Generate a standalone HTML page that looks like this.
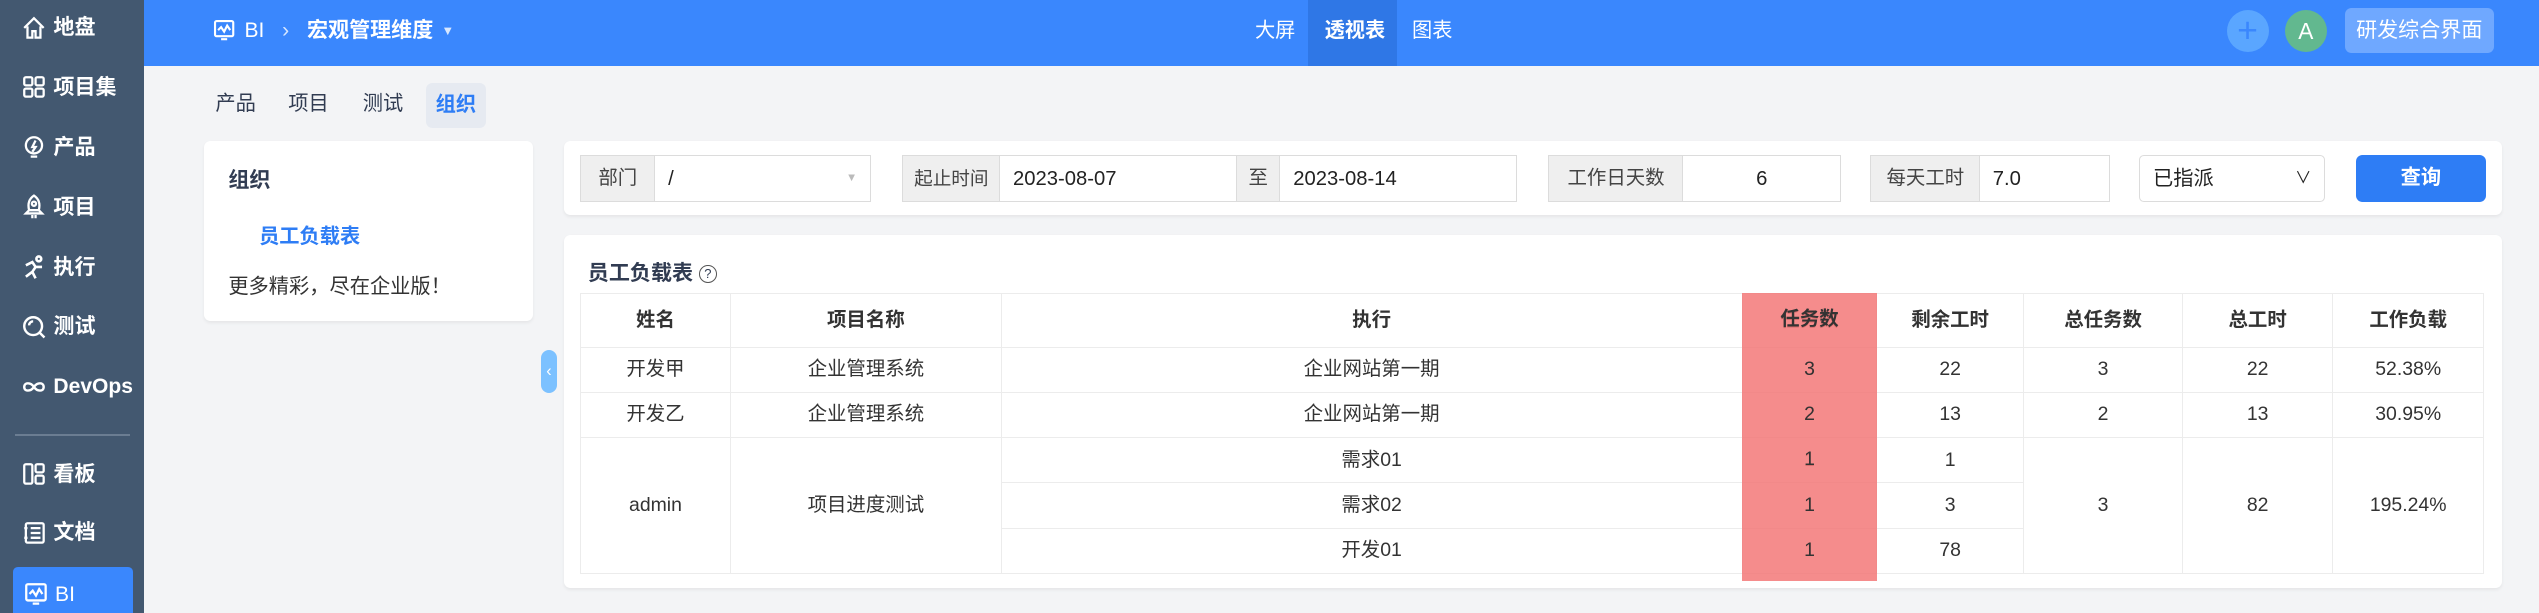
<!DOCTYPE html>
<html><head><meta charset="utf-8"><style>
*{box-sizing:border-box;margin:0;padding:0}
html,body{width:2539px;height:613px;overflow:hidden;background:#f3f4f6}
#r{zoom:1.6193;width:1568px;height:379px;position:relative;font-family:"Liberation Sans","Noto Sans CJK SC",sans-serif;font-size:12.5px;line-height:1.2;color:#313c52}
.a{position:absolute}
#sb{left:0;top:0;width:89px;height:379px;background:#435870}
.si{position:absolute;left:13px;color:#fff;font-size:13px;font-weight:bold;display:flex;align-items:center;gap:4px;height:20px}
.si svg{width:16px;height:16px}
#hd{left:89px;top:0;width:1479px;height:41px;background:#3a87fd;color:#fff}
.card{background:#fff;border-radius:4px;box-shadow:0 1px 2px rgba(0,0,0,.06)}
.lbl{position:absolute;top:96px;height:29px;background:#efefef;border:1px solid #dcdcdc;color:#444;display:flex;align-items:center;justify-content:center;font-size:12px}
.inp{position:absolute;top:96px;height:29px;background:#fff;border:1px solid #dcdcdc;display:flex;align-items:center;padding-left:8px;color:#222}
table{border-collapse:collapse;position:absolute;left:358px;top:181px;width:1176px}
td{border:1px solid #ececec;text-align:center;height:28px;font-size:12px;color:#333;line-height:1}
tr.h td{height:33px;font-weight:bold;color:#333}
</style></head><body><div id="r">
<div id="sb" class="a">
<div class="si" style="top:7px"><svg viewBox="0 0 16 16" fill="none" stroke="#fff" stroke-width="1.4"><path d="M2 8L8 2l6 6M4 7v7h3v-4h2v4h3V7"/></svg>地盘</div>
<div class="si" style="top:44px"><svg viewBox="0 0 16 16" fill="none" stroke="#fff" stroke-width="1.4"><rect x="2" y="2" width="5" height="5" rx="1"/><rect x="9" y="2" width="5" height="5" rx="1"/><rect x="2" y="9" width="5" height="5" rx="1"/><rect x="9" y="9" width="5" height="5" rx="1"/></svg>项目集</div>
<div class="si" style="top:81px"><svg viewBox="0 0 16 16" fill="none" stroke="#fff" stroke-width="1.4"><circle cx="8" cy="7" r="5"/><path d="M6 14h4M9 4L7 8h2l-2 3"/></svg>产品</div>
<div class="si" style="top:118px"><svg viewBox="0 0 16 16" fill="none" stroke="#fff" stroke-width="1.4"><path d="M8 1c3 2 4 5 3 9H5C4 6 5 3 8 1zM5 10l-2 2h10l-2-2M7 13v2M9 13v2"/><circle cx="8" cy="6" r="1.3"/></svg>项目</div>
<div class="si" style="top:155px"><svg viewBox="0 0 16 16" fill="none" stroke="#fff" stroke-width="1.6"><circle cx="11" cy="3" r="1.5"/><path d="M3 7l4-2 2 3-2 3 2 4M7 11l-4 3M9 8h4"/></svg>执行</div>
<div class="si" style="top:192px"><svg viewBox="0 0 16 16" fill="none" stroke="#fff" stroke-width="1.5"><circle cx="7.5" cy="7.5" r="5.5"/><path d="M11.5 11.5l3 3M5 7a2.5 2.5 0 0 1 2.5-2.5"/></svg>测试</div>
<div class="si" style="top:229px"><svg viewBox="0 0 16 16" fill="none" stroke="#fff" stroke-width="1.5"><path d="M8 8c-2-3-6-3-6 0s4 3 6 0 6-3 6 0-4 3-6 0"/></svg>DevOps</div>
<div class="a" style="left:9px;top:268px;width:71px;height:1px;background:#6b7d92"></div>
<div class="si" style="top:283px"><svg viewBox="0 0 16 16" fill="none" stroke="#fff" stroke-width="1.4"><rect x="2" y="2" width="5" height="12" rx="1"/><rect x="9" y="2" width="5" height="5" rx="1"/><rect x="9" y="9" width="5" height="5" rx="1"/></svg>看板</div>
<div class="si" style="top:319px"><svg viewBox="0 0 16 16" fill="none" stroke="#fff" stroke-width="1.4"><rect x="3" y="2" width="11" height="12" rx="1"/><path d="M6 5h6M6 8h6M6 11h6M2 5h2M2 11h2"/></svg>文档</div>
<div class="a" style="left:8px;top:350px;width:74px;height:29px;background:#3a87fd;border-radius:3px 3px 0 0"></div>
<div class="si" style="top:357px;left:14px;font-weight:normal"><svg viewBox="0 0 16 16" fill="none" stroke="#fff" stroke-width="1.4"><rect x="2" y="2" width="12" height="10" rx="1"/><path d="M4 8l2-2 2 3 2-4 2 3M6 14h4"/></svg>BI</div>
</div>
<div id="hd" class="a">
<div class="a" style="left:42px;top:11px;display:flex;align-items:center;gap:5px;font-size:13px"><svg width="15" height="15" viewBox="0 0 16 16" fill="none" stroke="#fff" stroke-width="1.4"><rect x="2" y="2" width="12" height="10" rx="1"/><path d="M4 8l2-2 2 3 2-4 2 3M6 14h4"/></svg>BI<span style="margin:0 6px;opacity:.8">›</span><b>宏观管理维度</b><span style="font-size:8px;opacity:.8">▼</span></div>
<div class="a" style="left:686px;top:12px">大屏</div>
<div class="a" style="left:719px;top:0;width:55px;height:41px;background:#2f77e6"></div>
<div class="a" style="left:729px;top:12px;font-weight:bold">透视表</div>
<div class="a" style="left:783px;top:12px">图表</div>
<div class="a" style="left:1286px;top:6px;width:26px;height:26px;border-radius:50%;background:#5aa6ff;color:#3a87fd;text-align:center;line-height:25px;font-size:22px">+</div>
<div class="a" style="left:1322px;top:6px;width:26px;height:26px;border-radius:50%;background:#62b88f;text-align:center;line-height:26px;font-size:14px">A</div>
<div class="a" style="left:1359px;top:5px;width:92px;height:28px;border-radius:4px;background:#6fa8ff;text-align:center;line-height:28px;font-size:13px">研发综合界面</div>
</div>
<div class="a" style="left:133px;top:57px">产品</div>
<div class="a" style="left:178px;top:57px">项目</div>
<div class="a" style="left:224px;top:57px">测试</div>
<div class="a" style="left:263px;top:51px;width:37px;height:28px;background:#e6eaf1;border-radius:4px;color:#2e7df5;font-weight:bold;text-align:center;line-height:28px">组织</div>
<div class="a card" style="left:126px;top:87px;width:203px;height:111px"></div>
<div class="a" style="left:141px;top:104px;font-weight:bold;font-size:13px">组织</div>
<div class="a" style="left:160px;top:139px;color:#2e7df5;font-weight:bold">员工负载表</div>
<div class="a" style="left:141px;top:170px;color:#333">更多精彩，尽在企业版！</div>
<div class="a" style="left:334px;top:216px;width:10px;height:27px;background:#7cc1ff;border-radius:5px;color:#fff;font-size:10px;text-align:center;line-height:27px">‹</div>
<div class="a card" style="left:348px;top:87px;width:1197px;height:46px"></div>
<div class="lbl" style="left:358px;width:47px">部门</div>
<div class="inp" style="left:404px;width:134px">/<span style="position:absolute;right:8px;font-size:7px;color:#bbb">▼</span></div>
<div class="lbl" style="left:557px;width:61px;font-size:11.5px">起止时间</div>
<div class="inp" style="left:617px;width:147px">2023-08-07</div>
<div class="lbl" style="left:763px;width:28px">至</div>
<div class="inp" style="left:790px;width:147px">2023-08-14</div>
<div class="lbl" style="left:956px;width:84px">工作日天数</div>
<div class="inp" style="left:1039px;width:98px;justify-content:center;padding:0">6</div>
<div class="lbl" style="left:1155px;width:68px">每天工时</div>
<div class="inp" style="left:1222px;width:81px">7.0</div>
<div class="inp" style="left:1321px;width:115px;border-radius:3px">已指派<span style="position:absolute;right:8px;font-size:10px">∨</span></div>
<div class="a" style="left:1455px;top:96px;width:80px;height:29px;background:#2e7df5;border-radius:4px;color:#fff;text-align:center;line-height:29px;font-weight:bold">查询</div>
<div class="a card" style="left:348px;top:145px;width:1197px;height:218px"></div>
<div class="a" style="left:363px;top:161px;font-weight:bold;font-size:13px">员工负载表 <span style="display:inline-block;width:11px;height:11px;border:1px solid #555;border-radius:50%;font-size:8px;text-align:center;line-height:10px;font-weight:normal;vertical-align:1px">?</span></div>
<table>
<colgroup><col style="width:93px"><col style="width:167px"><col style="width:458px"><col style="width:83px"><col style="width:91px"><col style="width:98px"><col style="width:93px"><col style="width:93px"></colgroup>
<tr class="h"><td>姓名</td><td>项目名称</td><td>执行</td><td>任务数</td><td>剩余工时</td><td>总任务数</td><td>总工时</td><td>工作负载</td></tr>
<tr><td>开发甲</td><td>企业管理系统</td><td>企业网站第一期</td><td>3</td><td>22</td><td>3</td><td>22</td><td>52.38%</td></tr>
<tr><td>开发乙</td><td>企业管理系统</td><td>企业网站第一期</td><td>2</td><td>13</td><td>2</td><td>13</td><td>30.95%</td></tr>
<tr><td rowspan="3">admin</td><td rowspan="3">项目进度测试</td><td>需求01</td><td>1</td><td>1</td><td rowspan="3">3</td><td rowspan="3">82</td><td rowspan="3">195.24%</td></tr>
<tr><td>需求02</td><td>1</td><td>3</td></tr>
<tr><td>开发01</td><td>1</td><td>78</td></tr>
</table>
<div class="a" style="left:1076px;top:181px;width:83px;height:178px;background:rgba(243,120,120,.85)"></div>
<div class="a" style="left:1076px;top:181px;width:83px;line-height:33px;text-align:center;font-weight:bold;color:#333;font-size:12px">任务数</div>
<div class="a" style="left:1076px;top:214px;width:83px;line-height:28px;text-align:center;color:#333;font-size:12px">3<br>2<br>1<br>1<br>1</div>
</div></body></html>
